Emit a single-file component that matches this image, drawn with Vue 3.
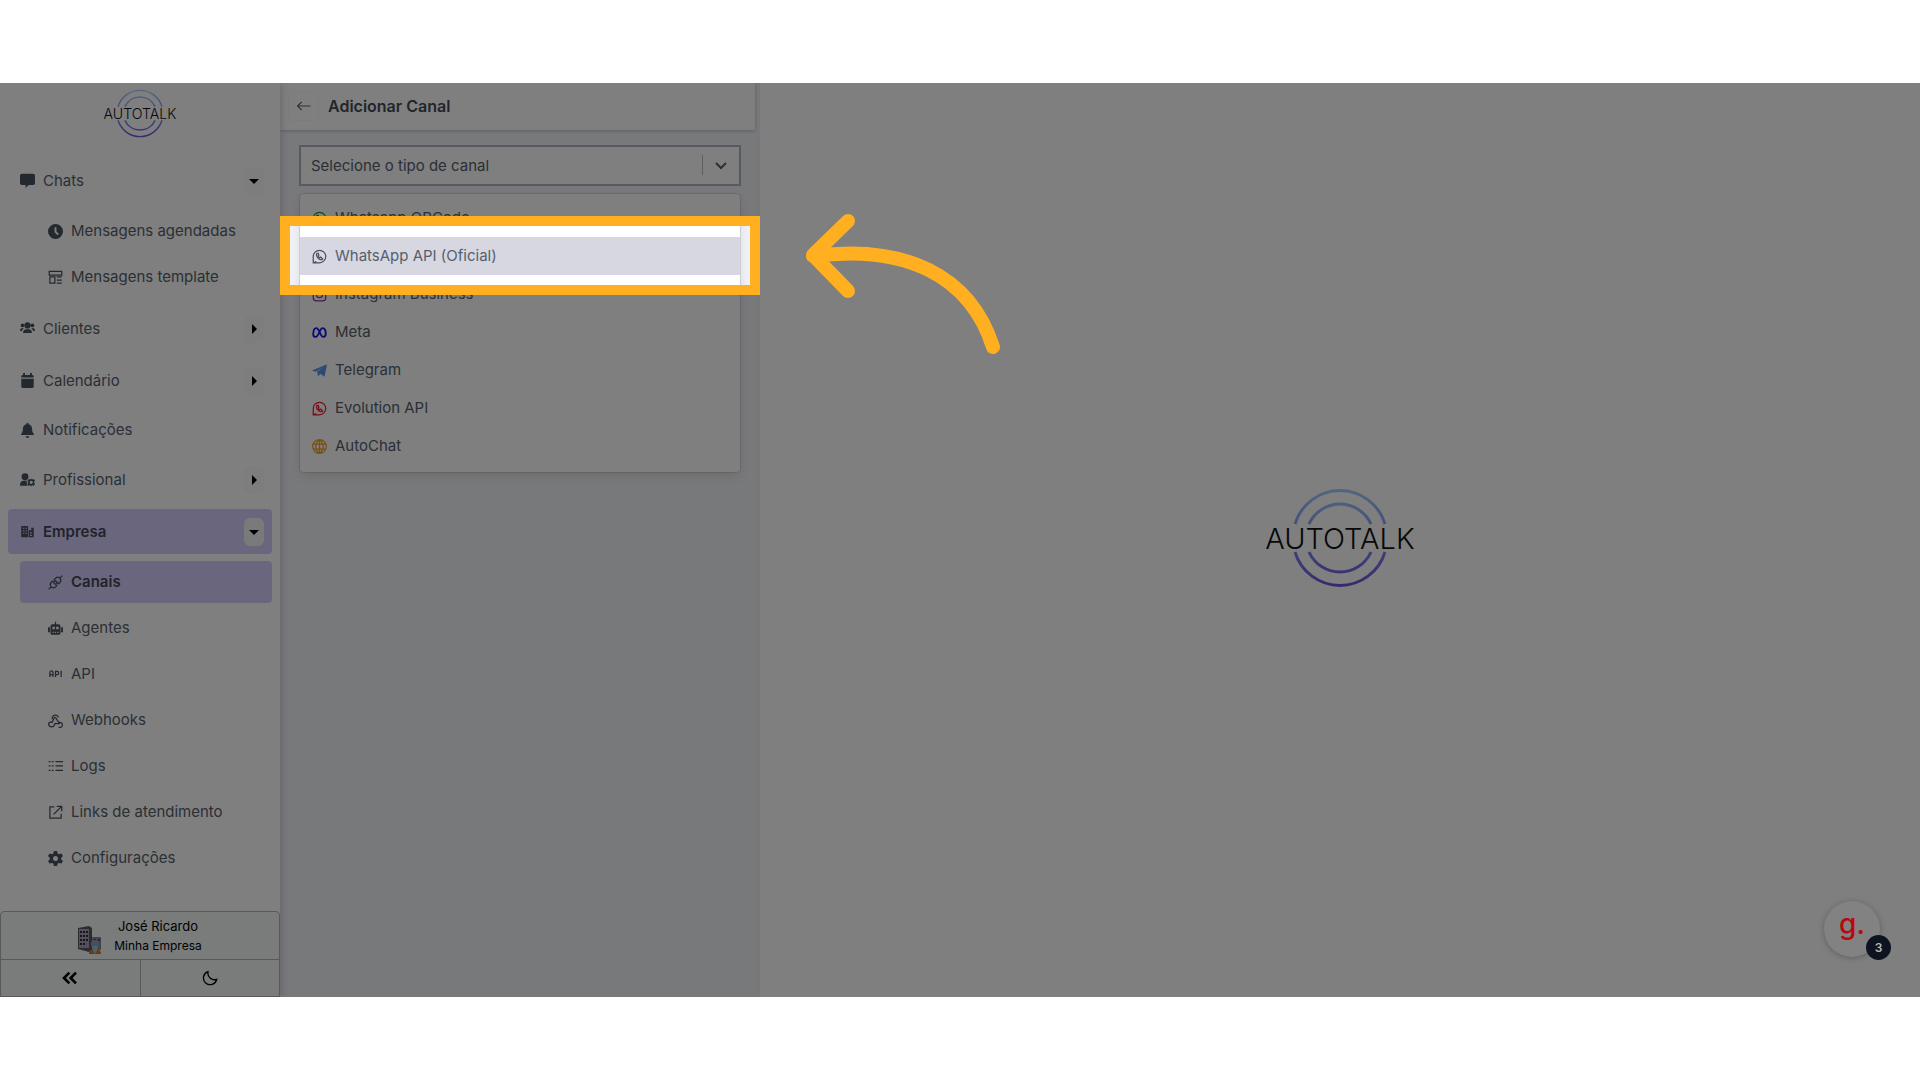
<template>
  <div class="page">
    <div class="stage">
      <!-- Menu lateral -->
      <aside class="sidebar">
        <a href="#" class="brand" aria-label="Autotalk">
          <svg class="logo logo-small" viewBox="0 0 160 96">
            <defs>
              <linearGradient id="ring" gradientUnits="userSpaceOnUse" x1="80" y1="0" x2="80" y2="96">
                <stop offset="0" stop-color="#a0ccff" />
                <stop offset="1" stop-color="#6a56e0" />
              </linearGradient>
            </defs>
            <path v-for="d in rings" :key="d" :d="d" class="ring" />
            <text x="80" y="59" text-anchor="middle">AUTOTALK</text>
          </svg>
        </a>

        <nav class="menu">
          <div v-for="item in menu" :key="item.label" class="group">
            <div class="item" :class="{ active: item.active, plain: !item.toggle }">
              <a href="#" class="item-link">
                <svg class="icon" viewBox="0 0 24 24">
                  <path v-for="(p, i) in icons[item.icon]" :key="i" :d="p.d" :class="p.c" />
                </svg>
                <span>{{ item.label }}</span>
              </a>
              <button v-if="item.toggle" type="button" class="toggle" :aria-label="'Abrir ' + item.label">
                <svg viewBox="0 0 10 10" width="10" height="10">
                  <path :d="item.children ? 'M0 3h10L5 8z' : 'M3 0v10l5-5z'" />
                </svg>
              </button>
            </div>
            <div v-if="item.children" class="submenu">
              <a
                v-for="child in item.children"
                :key="child.label"
                href="#"
                class="subitem"
                :class="{ active: child.active }"
              >
                <svg class="icon" viewBox="0 0 24 24">
                  <path v-for="(p, i) in icons[child.icon]" :key="i" :d="p.d" :class="p.c" />
                </svg>
                <span>{{ child.label }}</span>
              </a>
            </div>
          </div>
        </nav>

        <div class="account">
          <button type="button" class="user">
            <svg class="avatar" viewBox="0 0 24 28">
              <path d="M0 2l11-2 3 2v22l-3 2-11-3z" fill="#5b5866" />
              <path d="M1 3h10v19H1z" fill="#a7a1b4" />
              <path d="M2 5h2v2H2zM5 5h2v2H5zM8 5h2v2H8zM2 9h2v2H2zM5 9h2v2H5zM8 9h2v2H8zM2 13h2v2H2zM5 13h2v2H5zM8 13h2v2H8zM2 17h2v2H2zM5 17h2v2H5z" fill="#2f2b3a" />
              <path d="M14 11h9v13h-9z" fill="#8d8894" />
              <path d="M16 13h2v2h-2zM20 13h2v2h-2z" fill="#4b4658" />
              <circle cx="17" cy="18" r="4" fill="#86a5bd" />
              <path d="M11 28c0-4 3-5 6-5s6 1 6 5z" fill="#e0701c" />
              <path d="M14 20h6l-1 5-2 3-2-3z" fill="#9cc0da" />
            </svg>
            <span class="who">
              <span class="name">José Ricardo</span>
              <span class="company">Minha Empresa</span>
            </span>
          </button>
          <div class="tools">
            <button type="button" aria-label="Recolher menu">
              <svg viewBox="0 0 24 24" width="16" height="16">
                <path d="M11 4l-8 8 8 8M21 4l-8 8 8 8" class="heavy" />
              </svg>
            </button>
            <button type="button" aria-label="Modo escuro">
              <svg viewBox="0 0 24 24" width="16" height="16">
                <path d="M9 2.500A10 10 0 1 0 22 14A10 10 0 0 1 9 2.500z" class="line" />
              </svg>
            </button>
          </div>
        </div>
      </aside>

      <!-- Painel de canais -->
      <section class="panel">
        <header class="panel-header">
          <button type="button" class="back" aria-label="Voltar">
            <svg viewBox="0 0 24 24" width="14" height="14">
              <path d="M8 5l-7 7 7 7M1 12h22" class="line" />
            </svg>
          </button>
          <h1>Adicionar Canal</h1>
        </header>
        <div class="panel-body">
          <div class="select">
            <select v-model="selected" aria-label="Tipo de canal">
              <option value="">Selecione o tipo de canal</option>
              <option v-for="c in channels" :key="c.label" :value="c.label">{{ c.label }}</option>
            </select>
            <svg class="chevron" viewBox="0 0 20 20" width="20" height="20">
              <path d="M5 8l5 5 5-5" />
            </svg>
          </div>
          <div class="options">
            <button
              v-for="c in channels"
              :key="c.label"
              type="button"
              class="option"
              :class="{ focused: c.focused }"
              @click="selected = c.label"
            >
              <svg class="icon" viewBox="0 0 24 24" :class="c.tone">
                <path v-for="(p, i) in icons[c.icon]" :key="i" :d="p.d" :class="p.c" />
              </svg>
              <span>{{ c.label }}</span>
            </button>
          </div>
        </div>
        <div class="spotlight"></div>
      </section>

      <main class="content">
        <svg class="logo" viewBox="0 0 160 96">
          <path v-for="d in rings" :key="d" :d="d" class="ring" />
          <text x="80" y="59" text-anchor="middle">AUTOTALK</text>
        </svg>
      </main>

      <svg class="arrow" viewBox="0 0 204 150" width="204" height="150">
        <path d="M48 13L13 47l35 36M13 48C105 36 170 67 193 139" />
      </svg>

      <button type="button" class="guide">
        <span class="guide-mark">g.</span>
        <span class="guide-count">3</span>
      </button>
    </div>
  </div>
</template>

<script setup>
import { ref } from 'vue'

const selected = ref('')

// Arcos do logotipo
const rings = [
  'M35 34A47 47 0 0 1 125 34',
  'M49 34A34 34 0 0 1 111 34',
  'M35 62A47 47 0 0 0 125 62',
  'M49 62A34 34 0 0 0 111 62'
]

const whatsapp = [
  { d: 'M2 22V12a10 10 0 1 1 10 10zM2 22l5-2', c: 'line' },
  { d: 'M8 7c-2 3 0 6 2 8s5 3 7 1l-3-3-2 1c-1-1-2-2-2-3l1-1-1-3z', c: 'line' }
]

const icons = {
  chat: [{ d: 'M3 1h18q3 0 3 3v12q0 3-3 3h-7l-5 5v-5H3q-3 0-3-3V4q0-3 3-3z' }],
  clock: [{ d: 'M12 0a12 12 0 1 0 0 24 12 12 0 0 0 0-24zm-1.500 5h3v7l4 4-2 2-5-5z' }],
  template: [{ d: 'M2 2h20v6H2zM3 11h8v10H3zM14 11h8M14 16h8M14 21h8', c: 'line' }],
  users: [
    { d: 'M12 2a5 5 0 1 0 0 10 5 5 0 0 0 0-10zM5 19q0-6 5-6h4q5 0 5 6zM4 4a3 3 0 1 0 0 6 3 3 0 0 0 0-6zM20 4a3 3 0 1 0 0 6 3 3 0 0 0 0-6zM0 16q0-5 4-5l2 1q-3 2-3 4zM24 16q0-5-4-5l-2 1q3 2 3 4z' }
  ],
  calendar: [{ d: 'M5 0h3v3h8V0h3v3h1q2 0 2 3v1H2V6q0-3 2-3h1zM2 9h20v12q0 3-3 3H5q-3 0-3-3z' }],
  bell: [{ d: 'M10.500 0h3v2c5 1 6 5 6 9 0 4 3 6 3 8H1.500c0-2 3-4 3-8 0-4 1-8 6-9zM9 21h6q-1 3-3 3t-3-3z' }],
  userCog: [
    { d: 'M8 2a5 5 0 1 0 0 11A5 5 0 0 0 8 2zM0 22q0-8 6-8h5q-1 4 1 8z' },
    { d: 'M18 10l1 2 3-1 2 3-2 2 2 3-2 3-3-1-1 2-2-2-3 1-1-3 1-3-1-2 2-3 3 1zM18 14a2.500 2.500 0 1 0 0 5 2.500 2.500 0 0 0 0-5z' }
  ],
  building: [{ d: 'M2 3h11v18H2zM5 6v2h2V6zm4 0v2h2V6zM5 10v2h2v-2zm4 0v2h2v-2zM5 14v2h2v-2zm4 0v2h2v-2zM14 10h4V6h4v15h-8zm2 3v2h3v-2zm0 4v2h3v-2z' }],
  plug: [
    { d: 'M1 23l4-4M23 1l-4 4M5 19q-3-4 0-7l2-2 7 7-2 2q-4 3-7 0zM19 5q3 4 0 7l-2 2-7-7 2-2q4-3 7 0zM9 12l3-3M12 15l3-3', c: 'line' }
  ],
  robot: [{ d: 'M11 1h2v4h4q3 0 3 3v11q0 3-3 3H7q-3 0-3-3V8q0-3 3-3h4zM7 9v4h4V9zm6 0v4h4V9zm-6 8v2h2v-2zm4 0v2h2v-2zm4 0v2h2v-2zM0 10h3v8H0zM21 10h3v8h-3z' }],
  api: [{ d: 'M3 16V9q0-3 2.500-3T8 9v7M3 12h5M12 16V7h3q2 0 2 2.500T15 12h-3M21 6v10', c: 'line' }],
  webhook: [
    { d: 'M7 10A5 5 0 1 1 17 7M11 6l-5 10M12 7l5 8q6-1 6 4t-6 4M6 14q-5 0-5 4t5 4q4 0 5-5h8', c: 'line' }
  ],
  list: [{ d: 'M1 4h3M1 11h3M1 18h3M6 4h3M6 11h3M6 18h3M12 4h12M12 11h12M12 18h12', c: 'line' }],
  external: [{ d: 'M10 3H3v18h18v-7M14 2h8v8M22 2L9 15', c: 'line' }],
  gear: [{ d: 'M9.500 0h5l1 4 2 1 4-1 2.500 4-3 3v2l3 3-2.500 4-4-1-2 1-1 4h-5l-1-4-2-1-4 1L0 16l3-3v-2L0 8l2.500-4 4 1 2-1zM12 8a4 4 0 1 0 0 8 4 4 0 0 0 0-8z' }],
  whatsapp,
  instagram: [
    { d: 'M7 2h10q5 0 5 5v10q0 5-5 5H7q-5 0-5-5V7q0-5 5-5zM12 7a5 5 0 1 0 0 10 5 5 0 0 0 0-10zM17 6h2', c: 'line' }
  ],
  meta: [{ d: 'M2 15C2 9 4 5 7 5c5 0 6 14 11 14 3 0 4-2 4-5 0-5-2-9-5-9-5 0-6 14-11 14-3 0-4-2-4-4z', c: 'bold' }],
  telegram: [{ d: 'M0 12L24 2l-4 20-7-5-3 5-2-8L19 6 6 14z' }],
  globe: [
    { d: 'M12 1a11 11 0 1 0 0 22 11 11 0 0 0 0-22zM12 1q-6 5-6 11t6 11q6-5 6-11T12 1zM12 1v22M2 8h20M2 16h20', c: 'line' }
  ]
}

const menu = [
  {
    label: 'Chats',
    icon: 'chat',
    toggle: true,
    children: [
      { label: 'Mensagens agendadas', icon: 'clock' },
      { label: 'Mensagens template', icon: 'template' }
    ]
  },
  { label: 'Clientes', icon: 'users', toggle: true },
  { label: 'Calendário', icon: 'calendar', toggle: true },
  { label: 'Notificações', icon: 'bell' },
  { label: 'Profissional', icon: 'userCog', toggle: true },
  {
    label: 'Empresa',
    icon: 'building',
    toggle: true,
    active: true,
    children: [
      { label: 'Canais', icon: 'plug', active: true },
      { label: 'Agentes', icon: 'robot' },
      { label: 'API', icon: 'api' },
      { label: 'Webhooks', icon: 'webhook' },
      { label: 'Logs', icon: 'list' },
      { label: 'Links de atendimento', icon: 'external' },
      { label: 'Configurações', icon: 'gear' }
    ]
  }
]

const channels = [
  { label: 'Whatsapp QRCode', icon: 'whatsapp', tone: 'green' },
  { label: 'WhatsApp API (Oficial)', icon: 'whatsapp', tone: 'slate', focused: true },
  { label: 'Instagram Business', icon: 'instagram', tone: 'purple' },
  { label: 'Meta', icon: 'meta', tone: 'blue' },
  { label: 'Telegram', icon: 'telegram', tone: 'sky' },
  { label: 'Evolution API', icon: 'whatsapp', tone: 'red' },
  { label: 'AutoChat', icon: 'globe', tone: 'orange' }
]
</script>

<style>
body {
  margin: 0;
  background: #ffffff;
}
</style>

<style scoped>
.page {
  box-sizing: border-box;
  min-height: 100vh;
  padding: 83px 0;
  display: flex;
  font-family: Inter, 'Liberation Sans', sans-serif;
  font-size: 15px;
  line-height: 20px;
  color: #56606c;
}

.stage {
  position: relative;
  flex: 1;
  display: flex;
  overflow: hidden;
  background: #ffffff;
}

button {
  font: inherit;
  color: inherit;
  padding: 0;
  border: 0;
  background: none;
  cursor: pointer;
}

a {
  color: inherit;
  text-decoration: none;
}

svg {
  fill: currentColor;
}

.line,
.bold,
.heavy {
  fill: none;
  stroke: currentColor;
  stroke-width: 2;
}

.bold {
  stroke-width: 3;
}

.heavy {
  stroke-width: 4;
}

.logo {
  width: 160px;
  height: 96px;
  overflow: visible;
}

.logo-small {
  width: 78px;
  height: 47px;
}

.logo text {
  font-family: Inter, sans-serif;
  font-weight: 300;
  font-size: 29px;
  fill: #111111;
}

.ring {
  fill: none;
  stroke: url(#ring);
  stroke-width: 3;
}

/* Menu lateral */
.sidebar {
  position: relative;
  z-index: 1;
  flex: 0 0 280px;
  display: flex;
  flex-direction: column;
  background: #ffffff;
  box-shadow: 0 0 8px rgba(60, 60, 100, 0.3);
}

.brand {
  display: flex;
  justify-content: center;
  padding: 7px 0 21px;
}

.menu {
  flex: 1;
  display: flex;
  flex-direction: column;
  gap: 7px;
  padding: 0 8px;
}

.item {
  box-sizing: border-box;
  height: 45px;
  display: flex;
  align-items: center;
  justify-content: space-between;
  padding: 0 8px 0 12px;
  border-radius: 4px;
}

.item.plain {
  height: 40px;
}

.item-link {
  display: flex;
  align-items: center;
  gap: 8px;
}

.icon {
  flex: none;
  width: 15px;
  height: 15px;
  color: #49525f;
}

.toggle {
  width: 20px;
  height: 28px;
  display: flex;
  align-items: center;
  justify-content: center;
  border-radius: 6px;
  background: #f8fbf9;
  color: #000000;
}

.submenu {
  display: flex;
  flex-direction: column;
  gap: 4px;
  padding: 7px 0 1px 12px;
}

.subitem {
  height: 42px;
  display: flex;
  align-items: center;
  gap: 8px;
  padding-left: 28px;
  border-radius: 4px;
}

.active {
  background: #d4cdfa;
  color: #454754;
  font-weight: 600;
}

.active .toggle {
  background: #f2f7f5;
}

.account {
  border: 1px solid #aeb3bf;
  border-radius: 4px 4px 0 0;
  background: #f3f8f5;
  color: #000000;
}

.user {
  width: 100%;
  height: 48px;
  display: flex;
  align-items: center;
  justify-content: center;
  gap: 12px;
  border-bottom: 1px solid #aeb3bf;
}

.avatar {
  width: 24px;
  height: 28px;
  margin-top: 8px;
}

.who {
  display: flex;
  flex-direction: column;
}

.name {
  font-size: 13px;
}

.company {
  font-size: 12px;
}

.tools {
  display: flex;
}

.tools button {
  flex: 1;
  height: 36px;
  display: flex;
  align-items: center;
  justify-content: center;
}

.tools button + button {
  border-left: 1px solid #aeb3bf;
}

/* Painel de canais */
.panel {
  position: relative;
  flex: 0 0 480px;
  box-sizing: border-box;
  border-right: 5px solid #f0f0f5;
  background: #f1f2f7;
}

.panel-header {
  height: 45px;
  display: flex;
  align-items: center;
  gap: 9px;
  padding: 0 0 2px 8px;
  background: #ffffff;
  box-shadow: 0 1px 3px rgba(60, 60, 100, 0.3);
}

.panel-header h1 {
  margin: 0;
  font-size: 16px;
  font-weight: 600;
  color: #454c57;
}

.back {
  width: 31px;
  height: 30px;
  display: flex;
  align-items: center;
  justify-content: center;
  border: 1px solid #f8f8fa;
  border-radius: 4px;
}

.panel-body {
  padding: 15px 14px 0 19px;
}

.select {
  position: relative;
  display: flex;
}

.select select {
  flex: 1;
  height: 41px;
  padding: 0 40px 0 10px;
  appearance: none;
  border: 2px solid #b3b2c6;
  border-radius: 0;
  background: #ffffff;
  font: inherit;
  color: #56606c;
}

.chevron {
  position: absolute;
  top: 10px;
  right: 0;
  padding: 0 10px 0 8px;
  border-left: 1px solid #b8bcc4;
}

.chevron path {
  fill: none;
  stroke: #56606c;
  stroke-width: 2;
}

.options {
  display: flex;
  flex-direction: column;
  margin: 8px 1px 0;
  padding: 5px 0 7px;
  border-radius: 4px;
  background: #ffffff;
  box-shadow: 0 0 0 1px rgba(0, 0, 0, 0.1), 0 4px 11px rgba(0, 0, 0, 0.1);
}

.option {
  height: 38px;
  display: flex;
  align-items: center;
  gap: 8px;
  padding-left: 12px;
}

.option.focused {
  background: #d7d7e2;
}

.green {
  color: #179c2c;
}

.slate {
  color: #49525f;
}

.purple {
  color: #9a2aa0;
}

.blue {
  color: #1a10f0;
}

.sky {
  color: #5d92ea;
}

.red {
  color: #f01c2c;
}

.orange {
  color: #f0a020;
}

.content {
  flex: 1;
  display: flex;
  align-items: center;
  justify-content: center;
  padding-bottom: 4px;
}

/* Destaque do tutorial: escurece tudo fora da moldura */
.spotlight {
  position: absolute;
  z-index: 2;
  top: 133px;
  left: 0;
  right: -5px;
  height: 59px;
  border: 10px solid #ffaf20;
  box-shadow: 0 0 0 2000px rgba(0, 0, 0, 0.5);
  pointer-events: none;
}

.arrow {
  position: absolute;
  z-index: 3;
  top: 125px;
  left: 800px;
  pointer-events: none;
}

.arrow path {
  fill: none;
  stroke: #ffaf20;
  stroke-width: 14;
  stroke-linecap: round;
  stroke-linejoin: round;
}

.guide {
  position: absolute;
  z-index: 3;
  right: 40px;
  bottom: 40px;
  width: 56px;
  height: 56px;
  padding-bottom: 6px;
  border-radius: 50%;
  background: #828282;
  box-shadow: 0 1px 6px rgba(0, 0, 0, 0.25);
}

.guide-mark {
  font-size: 28px;
  font-weight: 500;
  color: #b8080c;
}

.guide-count {
  position: absolute;
  right: -11px;
  bottom: -3px;
  width: 25px;
  height: 25px;
  border-radius: 50%;
  background: #0d1420;
  color: #b8b8b8;
  font-size: 12px;
  font-weight: 600;
  line-height: 25px;
}
</style>
